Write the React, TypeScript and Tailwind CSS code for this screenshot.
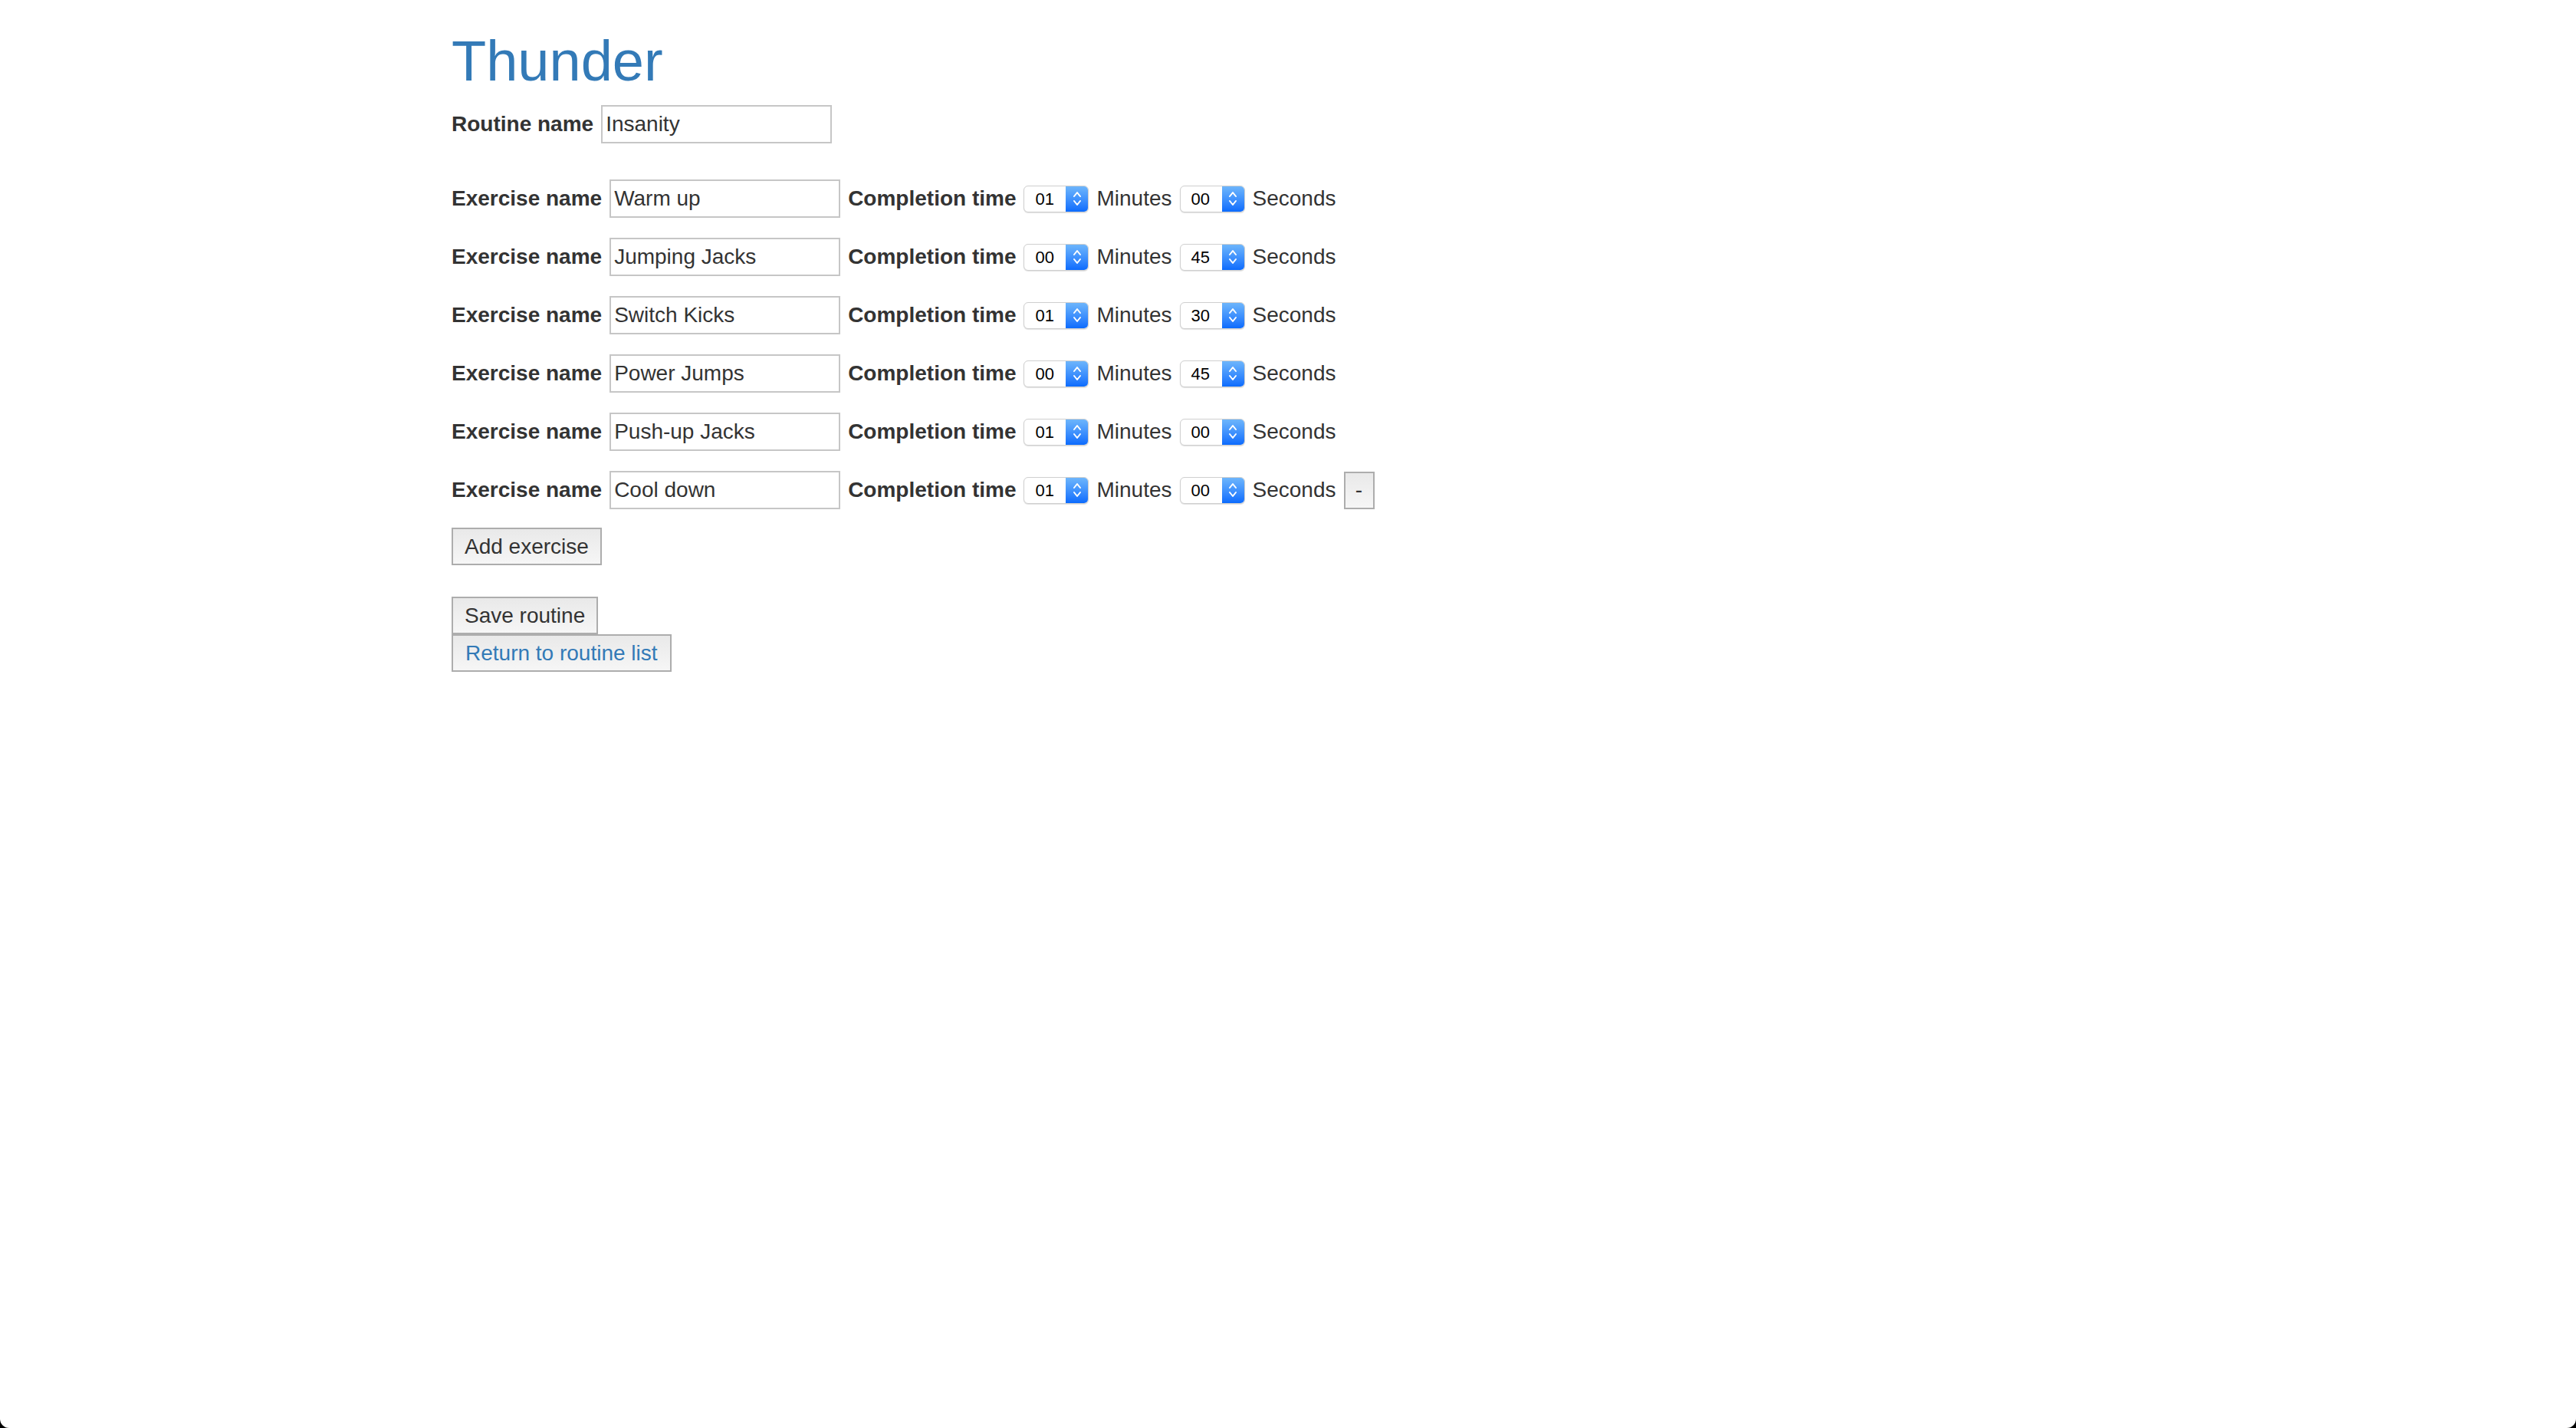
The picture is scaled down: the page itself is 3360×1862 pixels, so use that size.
import React from "react";

const rows = [
  { name: "Warm up", min: "01", sec: "00" },
  { name: "Jumping Jacks", min: "00", sec: "45" },
  { name: "Switch Kicks", min: "01", sec: "30" },
  { name: "Power Jumps", min: "00", sec: "45" },
  { name: "Push-up Jacks", min: "01", sec: "00" },
  { name: "Cool down", min: "01", sec: "00" },
];

function Stepper({ value }: { value: string }) {
  return (
    <div className="flex h-[35px] w-[85px] overflow-hidden rounded-[6px] border border-[#cfcfcf] bg-white shadow-[0_1px_1px_rgba(0,0,0,0.12)]">
      <div className="flex flex-1 items-center pl-[14px] text-[22px] text-black">{value}</div>
      <div className="flex w-[29px] items-center justify-center bg-gradient-to-b from-[#6db5fb] to-[#0a6bfd]">
        <svg width="12" height="22" viewBox="0 0 12 22" fill="none" stroke="white" strokeWidth="2" strokeLinecap="round" strokeLinejoin="round">
          <path d="M2 8 L6 3 L10 8" />
          <path d="M2 14 L6 19 L10 14" />
        </svg>
      </div>
    </div>
  );
}

function TextBox({ value }: { value: string }) {
  return (
    <div className="flex h-[50px] w-[301px] items-center border-2 border-[#c6c6c6] bg-white pl-[4px] text-[28px] text-[#333]">
      {value}
    </div>
  );
}

function Btn({ children, blue }: { children: React.ReactNode; blue?: boolean }) {
  return (
    <button
      className={
        "h-[49px] border-2 border-[#adadad] bg-gradient-to-b from-[#e9e9e9] to-[#f6f6f6] text-[28px] leading-none " +
        (blue ? "px-[16px] text-[#337ab7]" : "px-[15px] text-[#333]")
      }
    >
      {children}
    </button>
  );
}

export default function App() {
  return (
    <div className="min-h-[1862px] bg-black font-['Liberation_Sans',Arial,sans-serif]">
      <div className="h-[1862px] rounded-b-[12px] bg-white pl-[589px] pt-[40px] text-[#333]">
        <h1 className="mb-[18px] text-[74px] font-normal leading-[79px] text-[#337ab7]">Thunder</h1>
        <div className="flex h-[50px] items-center gap-[10px] text-[28px]">
          <span className="font-bold">Routine name</span>
          <TextBox value="Insanity" />
        </div>
        <div className="mt-[47px] flex flex-col gap-[26px]">
          {rows.map((r, i) => (
            <div key={i} className="flex h-[50px] items-center gap-[10px] text-[28px]">
              <span className="font-bold">Exercise name</span>
              <TextBox value={r.name} />
              <span className="font-bold">Completion time</span>
              <Stepper value={r.min} />
              <span>Minutes</span>
              <Stepper value={r.sec} />
              <span>Seconds</span>
              {i === rows.length - 1 && (
                <button className="h-[49px] w-[40px] border-2 border-[#adadad] bg-gradient-to-b from-[#e9e9e9] to-[#f6f6f6] text-[28px] leading-none text-[#333]">
                  -
                </button>
              )}
            </div>
          ))}
        </div>
        <div className="mt-[24px]">
          <Btn>Add exercise</Btn>
        </div>
        <div className="mt-[41px] flex flex-col items-start">
          <Btn>Save routine</Btn>
          <Btn blue>Return to routine list</Btn>
        </div>
      </div>
    </div>
  );
}
